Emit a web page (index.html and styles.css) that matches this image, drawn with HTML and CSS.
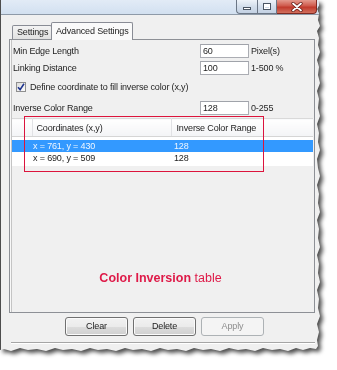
FILE: index.html
```html
<!DOCTYPE html>
<html>
<head>
<meta charset="utf-8">
<link rel="stylesheet" href="styles.css">
</head>
<body>
<div class="shot">
  <div class="window">
    <div class="titlebar">
      <div class="controls">
        <span class="ctl min"><span class="min-glyph"></span></span>
        <span class="ctl max"><span class="max-glyph"></span></span>
        <span class="ctl close">
          <svg width="12" height="10" viewBox="0 0 12 10"><path d="M2 1.5 L10 8.5 M10 1.5 L2 8.5" stroke="#5a1510" stroke-width="3.2" stroke-linecap="round"/><path d="M2 1.5 L10 8.5 M10 1.5 L2 8.5" stroke="#ffffff" stroke-width="1.8" stroke-linecap="round"/></svg>
        </span>
      </div>
    </div>
    <div class="content">
      <div class="tabs">
        <div class="tab">Settings</div>
        <div class="tab active">Advanced Settings</div>
      </div>
      <div class="panel">
        <div class="form">
          <div class="row r1"><span class="label">Min Edge Length</span><span class="input">60</span><span class="unit">Pixel(s)</span></div>
          <div class="row r2"><span class="label">Linking Distance</span><span class="input">100</span><span class="unit">1-500 %</span></div>
          <div class="row r3 check-row">
            <span class="checkbox"><svg width="8" height="8" viewBox="0 0 8 8"><path d="M1 4.2 L3.1 6.6 L7 0.8" fill="none" stroke="#21368f" stroke-width="1.6"/></svg></span>
            <span class="check-label">Define coordinate to fill inverse color (x,y)</span>
          </div>
          <div class="row r4"><span class="label">Inverse Color Range</span><span class="input">128</span><span class="unit">0-255</span></div>
        </div>
        <table class="grid">
          <colgroup><col class="c1"><col class="c2"><col class="c3"></colgroup>
          <thead>
            <tr><th></th><th>Coordinates (x,y)</th><th>Inverse Color Range</th></tr>
          </thead>
          <tbody>
            <tr class="spacer"><td colspan="3"></td></tr>
            <tr class="selected"><td></td><td>x = 761, y = 430</td><td>128</td></tr>
            <tr><td></td><td>x = 690, y = 509</td><td>128</td></tr>
            <tr class="spacer2"><td colspan="3"></td></tr>
          </tbody>
        </table>
        <div class="note"><b>Color Inversion</b> table</div>
        <div class="annotation"></div>
      </div>
      <div class="buttons">
        <span class="btn">Clear</span>
        <span class="btn">Delete</span>
        <span class="btn disabled">Apply</span>
      </div>
      <div class="sep"></div>
    </div>
  </div>
</div>
</body>
</html>
```
FILE: styles.css
```css
* { box-sizing: border-box; margin: 0; padding: 0; }
body {
  margin: 0;
  background: #ffffff;
  font-family: "Liberation Sans", Arial, sans-serif;
  font-size: 9px;
  letter-spacing: -0.15px;
  color: #1e1e1e;
  width: 337px;
  height: 370px;
  overflow: hidden;
}
.shot {
  width: 321px;
  height: 353px;
  filter: drop-shadow(3px 3px 2px rgba(0, 0, 0, 0.7));
}
.window {
  width: 321px;
  height: 353px;
  overflow: hidden;
  background: #f0f0f0;
  border-left: 1px solid #4d4d4d;
  display: flex;
  flex-direction: column;
  clip-path: polygon(0 0, 318px 0, 319px 5px, 317px 9px, 319px 14px, 318px 20px, 320px 26px, 317px 31px, 319px 38px, 318px 45px, 320px 52px, 317px 60px, 319px 67px, 318px 75px, 320px 83px, 317px 91px, 319px 99px, 318px 108px, 320px 116px, 317px 124px, 319px 133px, 318px 142px, 320px 150px, 317px 159px, 318px 168px, 320px 176px, 317px 185px, 319px 194px, 318px 203px, 320px 212px, 317px 220px, 319px 229px, 318px 238px, 320px 247px, 317px 255px, 319px 264px, 318px 273px, 320px 282px, 317px 290px, 319px 299px, 318px 308px, 320px 316px, 317px 324px, 319px 332px, 317px 340px, 318px 346px, 316px 349px, 310px 348px, 303px 350px, 296px 348px, 288px 351px, 280px 349px, 272px 350px, 263px 348px, 255px 351px, 246px 349px, 238px 350px, 229px 348px, 220px 351px, 211px 349px, 203px 350px, 194px 348px, 186px 351px, 177px 349px, 168px 350px, 160px 348px, 151px 351px, 142px 349px, 133px 350px, 125px 348px, 116px 351px, 107px 349px, 98px 350px, 90px 348px, 81px 351px, 72px 349px, 63px 350px, 55px 348px, 46px 351px, 37px 349px, 28px 350px, 20px 348px, 11px 351px, 4px 349px, 0 350px);
}
.titlebar {
  height: 15px;
  flex: none;
  background: linear-gradient(#e2ebf6, #d2e0f0);
  border-bottom: 1px solid #8e9aa8;
  display: flex;
  justify-content: flex-end;
  padding-right: 4px;
}
.controls { display: flex; height: 14px; }
.ctl {
  height: 14px;
  border: 1px solid #6b7685;
  border-top: none;
  display: flex;
  align-items: center;
  justify-content: center;
  background: linear-gradient(#eef3f9, #d3deeb 50%, #c3d1e3);
}
.min { width: 21px; border-radius: 0 0 0 4px; border-right: none; }
.max { width: 20px; }
.close {
  width: 40px;
  border-radius: 0 0 4px 0;
  border-left: none;
  border-color: #7f2a22;
  background: linear-gradient(#e49a8e, #cf5a4c 45%, #c13a2c 55%, #d2705e);
}
.min-glyph {
  width: 8px;
  height: 3px;
  margin-top: 4px;
  background: #fff;
  border: 1px solid #4a5563;
}
.max-glyph {
  width: 8px;
  height: 7px;
  border: 1px solid #4a5563;
  box-shadow: inset 0 0 0 1px #fff, inset 0 2px 0 1px #fff;
}
.content {
  width: 320px;
  flex: 1;
  display: flex;
  flex-direction: column;
  padding: 0 6px 0 8px;
}
.tabs {
  height: 24px;
  flex: none;
  display: flex;
  align-items: flex-end;
  padding-left: 3px;
  position: relative;
  z-index: 1;
}
.tab {
  height: 14px;
  width: 40px;
  border: 1px solid #898c95;
  border-bottom: none;
  background: linear-gradient(#f3f3f3, #e1e1e1);
  padding-left: 4px;
  line-height: 13px;
  border-radius: 2px 2px 0 0;
}
.tab.active {
  height: 18px;
  width: 82px;
  margin-left: -1px;
  margin-bottom: -1px;
  background: #fafafa;
  line-height: 16px;
}
.panel {
  position: relative;
  height: 274px;
  width: 306px;
  flex: none;
  overflow: hidden;
  border: 1px solid #8d9096;
  background: #f0f0f0;
  box-shadow: inset 1px 0 0 #f8f8f8, inset 2px 0 0 #c4c4c4;
  padding-top: 2px;
}
.form { padding-left: 3px; }
.row {
  display: grid;
  grid-template-columns: 185px 49px auto;
  column-gap: 2px;
  align-items: center;
}
.r1 { height: 17px; }
.r2 { height: 17px; }
.r3 { height: 22px; }
.r4 { height: 19px; }
.input {
  height: 14px;
  background: #fff;
  border: 1px solid #abadb3;
  border-top-color: #a0a3aa;
  padding-left: 2px;
  line-height: 12px;
}
.check-row {
  display: flex;
  align-items: center;
  padding-left: 3px;
  gap: 4px;
}
.checkbox {
  width: 10px;
  height: 10px;
  border: 1px solid #8f8f8f;
  background: linear-gradient(135deg, #dcdcdc, #fcfcfc);
  display: flex;
  align-items: center;
  justify-content: center;
}
.grid {
  width: 301px;
  margin: 1px 0 0 2px;
  table-layout: fixed;
  border-collapse: collapse;
  border-spacing: 0;
  background: #fff;
  border-top: 1px solid #d9d9d9;
}
.c1 { width: 20px; }
.c2 { width: 139px; }
.c3 { width: 142px; }
.grid th {
  height: 18px;
  padding: 0 0 0 4px;
  font-weight: normal;
  text-align: left;
  background: linear-gradient(#ffffff, #f3f4f6);
  border-bottom: 1px solid #d5d5d5;
  border-left: 1px solid #e1e2e5;
  white-space: nowrap;
  overflow: hidden;
}
.grid th:first-child { border-left: none; }
.grid th:last-child { padding-left: 5px; }
.grid td {
  height: 12px;
  line-height: 12px;
  padding: 0 0 0 1px;
  white-space: nowrap;
  overflow: hidden;
}
.grid td:last-child { padding-left: 3px; }
.grid tr.spacer td { height: 3px; line-height: 0; }
.grid tr.spacer2 td { height: 2px; line-height: 0; }
.grid tr.selected td { background: #3399ff; color: #eef6ff; }
.note {
  margin-top: 104px;
  text-align: center;
  padding-right: 3px;
  font-size: 12.5px;
  letter-spacing: 0;
  line-height: 16px;
  color: #de1a48;
}
.annotation {
  position: absolute;
  left: 14px;
  top: 76px;
  width: 240px;
  height: 56px;
  border: 1px solid #dc143c;
}
.buttons {
  display: flex;
  gap: 5px;
  margin-top: 4px;
  padding-left: 56px;
  flex: none;
}
.btn {
  width: 63px;
  height: 19px;
  border: 1px solid #707070;
  border-radius: 3px;
  background: linear-gradient(#f2f2f2 0%, #ebebeb 50%, #dddddd 51%, #cfcfcf 100%);
  box-shadow: inset 0 0 0 1px #fbfbfb;
  text-align: center;
  line-height: 17px;
}
.btn.disabled {
  border-color: #adb2b5;
  background: #f4f4f4;
  color: #8d8d8d;
  box-shadow: none;
}
.sep {
  margin-top: 6px;
  margin-left: 2px;
  border-top: 1px solid #a5a5a5;
  border-bottom: 1px solid #ffffff;
  flex: none;
}
```
